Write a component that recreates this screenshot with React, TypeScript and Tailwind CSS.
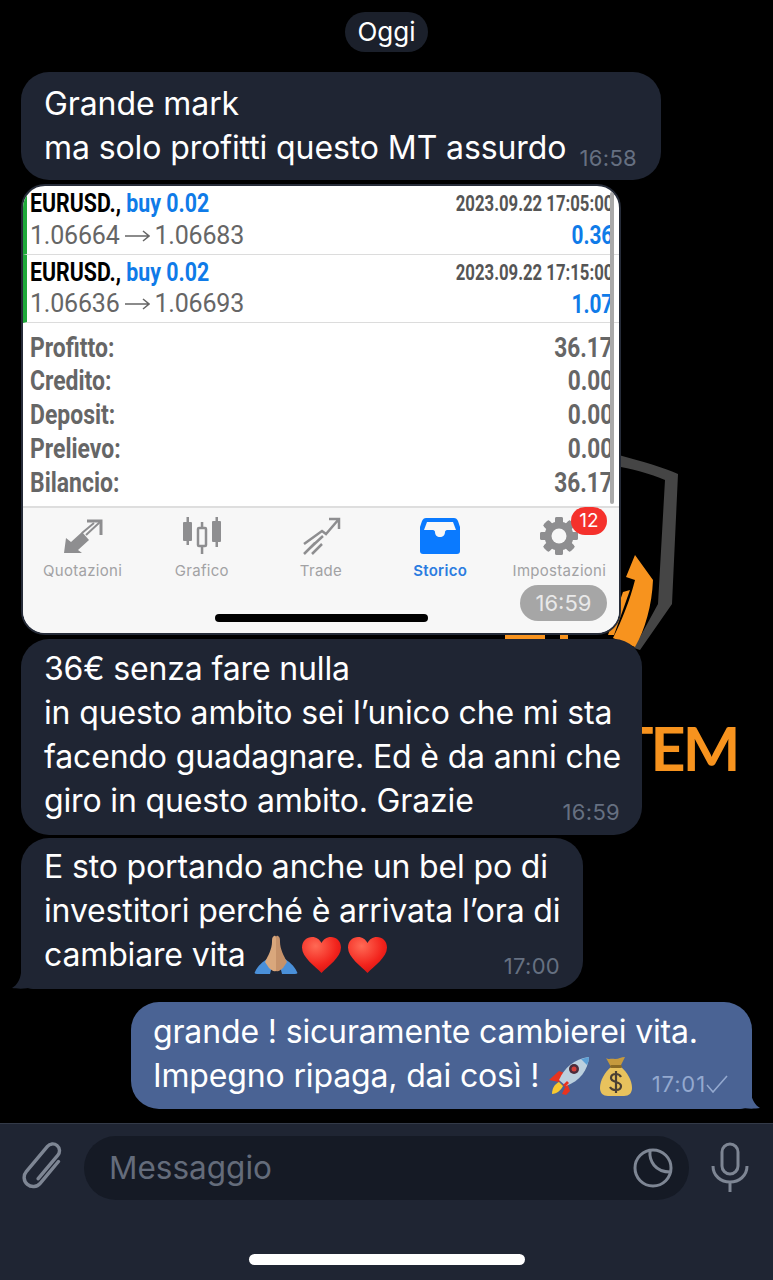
import { ReactNode } from 'react';

const trades = [
  { date: '2023.09.22 17:05:00', from: '1.06664', to: '1.06683', profit: '0.36' },
  { date: '2023.09.22 17:15:00', from: '1.06636', to: '1.06693', profit: '1.07' },
];

const summary = [
  { label: 'Profitto:', value: '36.17' },
  { label: 'Credito:', value: '0.00' },
  { label: 'Deposit:', value: '0.00' },
  { label: 'Prelievo:', value: '0.00' },
  { label: 'Bilancio:', value: '36.17' },
];

function Heart() {
  return (
    <svg width="41" height="38" viewBox="0 0 41 38">
      <defs>
        <radialGradient id="heartFill" cx="0.35" cy="0.25" r="0.9">
          <stop offset="0" stopColor="#ff6a55" />
          <stop offset="0.6" stopColor="#f2231c" />
          <stop offset="1" stopColor="#c90f12" />
        </radialGradient>
      </defs>
      <path d="M20.5 37C14 30 1 21.500 1 11.500 1 5 6 1 11 1c4.500 0 7.800 2.600 9.500 6C22.200 3.600 25.500 1 30 1c5 0 10 4 10 10.500C40 21.500 27 30 20.500 37z" fill="url(#heartFill)" />
    </svg>
  );
}

function PrayingHands() {
  return (
    <svg width="46" height="40" viewBox="0 0 46 40">
      <path d="M2 37c3-7 8-10 13-14l4 8-2 8H4c-2 0-3-1-2-2zM44 37c-3-7-8-10-13-14l-4 8 2 8h13c2 0 3-1 2-2z" fill="#4a90d9" />
      <path d="M21 1c2-1 2 1 2 2v33c-3 1-4-1-7-3l-4-6c3-6 7-13 7-20 0-3 0-5 2-6z" fill="#d9a77c" />
      <path d="M25 1c-2-1-2 1-2 2v33c3 1 4-1 7-3l4-6c-3-6-7-13-7-20 0-3 0-5-2-6z" fill="#c6926a" />
    </svg>
  );
}

function Rocket() {
  return (
    <svg width="42" height="40" viewBox="0 0 42 40">
      <path d="M1 24l10-9 8 3-8 8z" fill="#e8331f" />
      <path d="M14 38l5-11 3 8-4 4z" fill="#e8331f" />
      <path d="M4 38c0-6 3-10 7-12l4 4c-2 4-6 8-11 8z" fill="#f8c92f" />
      <path d="M11 24C16 12 26 3 41 1c-1 13-9 24-23 29z" fill="#bcd0de" />
      <path d="M33 3l8-2c0 3-1 6-2 8z" fill="#5b9fd6" />
      <path d="M15 29l4-4 2 2-4 4z" fill="#e8331f" />
      <circle cx="26" cy="13" r="5" fill="#4a2c3b" />
      <circle cx="26" cy="13" r="2.500" fill="#d43f38" />
    </svg>
  );
}

function MoneyBag() {
  return (
    <svg width="32" height="40" viewBox="0 0 32 40">
      <path d="M6 2c3 2 5 0 9 1 4 0 6-2 10-2l-5 10h-9z" fill="#c69a3d" />
      <path d="M11 11h10c6 5 11 13 11 21 0 5-3 8-8 8H8c-5 0-8-3-8-8 0-8 5-16 11-21z" fill="#e8c25d" />
      <rect x="10" y="9" width="12" height="3" rx="1.500" fill="#8a6a24" />
      <path d="M21 21c-1-2-3-3-5-3-3 0-5 1.500-5 4 0 5 10 3 10 8 0 2.500-2 4-5 4-2.500 0-5-1-6-3M16 15v22" fill="none" stroke="#4b4034" strokeWidth="2.200" />
    </svg>
  );
}

function Quotes() {
  return (
    <svg width="40" height="36" viewBox="0 0 40 36" fill="#8e8e90">
      <path d="M1 35l2-15 5 4 11-10 7 8-11 10 4 3z" />
      <path d="M24 3h14v14" fill="none" stroke="#8e8e90" strokeWidth="3" />
      <path d="M37 4L23 17M31 5L19 15" fill="none" stroke="#8e8e90" strokeWidth="2" />
    </svg>
  );
}

function Candles() {
  return (
    <svg width="40" height="38" viewBox="0 0 40 38" fill="#8e8e90">
      <rect x="1" y="5" width="9" height="19" rx="1" />
      <rect x="4.500" y="0" width="2.500" height="28" />
      <rect x="30" y="4" width="9" height="21" rx="1" />
      <rect x="33.500" y="0" width="2.500" height="30" />
      <rect x="16" y="11" width="8" height="18" rx="1" fill="none" stroke="#8e8e90" strokeWidth="2.500" />
      <rect x="18.800" y="5" width="2.500" height="6" />
      <rect x="18.800" y="29" width="2.500" height="8" />
    </svg>
  );
}

function TradeIcon() {
  return (
    <svg width="40" height="38" viewBox="0 0 40 38" fill="none" stroke="#8e8e90" strokeWidth="2.500">
      <path d="M28 2h10v10M37.500 2.500L25 17l-4-3L3 27" />
      <path d="M8 32l14-13M3 37l11-11M11 37l10-10" />
    </svg>
  );
}

function Inbox() {
  return (
    <svg width="40" height="36" viewBox="0 0 40 36">
      <path d="M6 0h28c2 0 3 1 4 3l2 6v24c0 2-1 3-3 3H3c-2 0-3-1-3-3V9l2-6c1-2 2-3 4-3z" fill="#0a7aff" />
      <path d="M7 4h26l3 8H27c-1 0-2 1-2 2 0 3-2 5-5 5s-5-2-5-5c0-1-1-2-2-2H4z" fill="#f7f7f7" />
    </svg>
  );
}

function Gear() {
  const teeth = [0, 45, 90, 135, 180, 225, 270, 315];
  return (
    <svg width="38" height="38" viewBox="0 0 38 38">
      {teeth.map((angle) => (
        <rect key={angle} x="15" y="0" width="8" height="38" rx="2" fill="#8e8e90" transform={`rotate(${angle} 19 19)`} />
      ))}
      <circle cx="19" cy="19" r="14.500" fill="#8e8e90" />
      <circle cx="19" cy="19" r="7.500" fill="#f7f7f7" />
    </svg>
  );
}

function Tab({ icon, label, active }: { icon: ReactNode; label: string; active?: boolean }) {
  return (
    <div className="flex flex-col items-center">
      <div className="h-[40px] flex items-center justify-center">{icon}</div>
      <span className={`mt-[6px] text-[15px] leading-[18px] tracking-[0.3px] font-['Inter',sans-serif] ${active ? 'text-[#2b7ce0] font-semibold' : 'text-[#a2a2a4]'}`}>
        {label}
      </span>
    </div>
  );
}

function Time({ children, className = 'text-[#667081]' }: { children: ReactNode; className?: string }) {
  return <span className={`text-[22px] leading-[24px] tracking-[0.3px] ${className}`}>{children}</span>;
}

function TradeCard() {
  return (
    <div className="w-[600px] h-[451px] mt-[4px] rounded-[24px] border-2 border-[#262c39] bg-white overflow-hidden relative font-['Roboto',sans-serif] whitespace-nowrap">
      {trades.map((t) => (
        <div key={t.date} className="h-[68.500px] border-b border-[#dcdcdc] border-l-4 border-l-[#1fa83a] pl-[3px] pr-[6px]">
          <div className="flex justify-between items-center h-[33px] pt-[2px]">
            <span className="inline-block scale-x-[0.82] origin-left text-[26px] font-bold text-black">
              EURUSD., <span className="text-[#0f7be8]">buy 0.02</span>
            </span>
            <span className="inline-block scale-x-[0.76] origin-right text-[22px] font-bold text-[#555]">{t.date}</span>
          </div>
          <div className="flex justify-between items-center h-[33px]">
            <span className="text-[25px] text-[#666] tracking-[-0.2px] flex items-center gap-[5px]">
              {t.from}
              <svg width="25" height="14" viewBox="0 0 25 14" fill="none" stroke="#666" strokeWidth="1.500">
                <path d="M0 7h24M18 2l6 5-6 5" />
              </svg>
              {t.to}
            </span>
            <span className="inline-block scale-x-[0.8] origin-right text-[26px] font-bold text-[#0f7be8]">{t.profit}</span>
          </div>
        </div>
      ))}
      <div className="h-[183px] pt-[8px] pl-[7px] pr-[6px]">
        {summary.map((s) => (
          <div key={s.label} className="flex justify-between items-center h-[33.800px] text-[27px] font-bold text-[#666]">
            <span className="inline-block scale-x-[0.85] origin-left">{s.label}</span>
            <span className="inline-block scale-x-[0.84] origin-right">{s.value}</span>
          </div>
        ))}
      </div>
      <div className="absolute right-[5px] top-[6px] h-[312px] w-[4px] rounded bg-[#a9a9a9]" />
      <div className="h-[127px] bg-[#f7f7f7] border-t-2 border-[#dedede] pt-[8px]">
        <div className="grid grid-cols-5">
          <Tab icon={<Quotes />} label="Quotazioni" />
          <Tab icon={<Candles />} label="Grafico" />
          <Tab icon={<TradeIcon />} label="Trade" />
          <Tab icon={<Inbox />} label="Storico" active />
          <Tab icon={<Gear />} label="Impostazioni" />
        </div>
        <div className="w-[213px] h-[8px] rounded-full bg-black ml-[192px] mt-[34px]" />
      </div>
      <span className="absolute right-[12px] top-[321px] w-[36px] h-[28px] rounded-full bg-[#f5312c] text-white text-[19px] leading-[28px] text-center font-['Inter',sans-serif]">12</span>
      <span className="absolute right-[12px] top-[399px] w-[87px] h-[36px] rounded-full bg-[#a6a6a6] text-[#e9e9e9] text-[22px] leading-[36px] text-center font-['Inter',sans-serif]">16:59</span>
    </div>
  );
}

function BackgroundLogo() {
  return (
    <div className="absolute left-0 top-0 w-full">
      <svg className="absolute left-[480px] top-[440px]" width="293" height="220" viewBox="0 0 293 220">
        <path d="M135 14c30 8 50 14 63 20l-6 130-32 46-6-2 24-44 7-124c-14-6-35-12-50-14z" fill="#454545" />
        <path d="M155 115l18 25c-1 25-8 50-18 67l-22-9c9-18 17-38 22-58l-9-3z" fill="#f7931e" />
        <path d="M143 152l7-2-16 45-6 0z" fill="#f7931e" />
        <path d="M25 190h40v12H25zM80 190h8v12h-8z" fill="#f7931e" />
      </svg>
      <span className="absolute left-[617px] top-[712px] text-[61px] leading-[72px] tracking-[-3px] font-bold text-[#f7931e] font-['Lato',sans-serif]">TEM</span>
    </div>
  );
}

export default function App() {
  return (
    <div className="relative w-[773px] h-[1280px] bg-black overflow-hidden flex flex-col font-['Inter',sans-serif] text-white">
      <BackgroundLogo />
      <div className="relative h-[1123px] pt-[12px] px-[21px]">
        <div className="flex justify-center">
          <span className="h-[40px] w-[83px] rounded-full bg-[#1b202b] text-[26px] leading-[40px] text-center text-white">Oggi</span>
        </div>

        <div className="mt-[20px] w-[640px] h-[108px] rounded-[28px] bg-[#1f2533] pl-[23px] pr-[24px] pt-[10px] text-[32px] leading-[44px] tracking-[-0.1px] whitespace-nowrap">
          <div>Grande mark</div>
          <div className="flex justify-between items-end">
            <span>ma solo profitti questo MT assurdo</span>
            <Time>16:58</Time>
          </div>
        </div>

        <TradeCard />

        <div className="mt-[4px] w-[621px] h-[196px] rounded-[28px] bg-[#1f2533] pl-[23px] pr-[22px] pt-[8px] text-[32px] leading-[44px] tracking-[-0.15px] whitespace-nowrap">
          <div>36€ senza fare nulla</div>
          <div>in questo ambito sei l’unico che mi sta</div>
          <div>facendo guadagnare. Ed è da anni che</div>
          <div className="flex justify-between items-end">
            <span>giro in questo ambito. Grazie</span>
            <span className="translate-y-[8px]"><Time>16:59</Time></span>
          </div>
        </div>

        <div className="relative mt-[3px] w-[562px] h-[151px] rounded-[28px] rounded-bl-[12px] bg-[#1f2533] pl-[23px] pr-[23px] pt-[7px] text-[32px] leading-[44px] tracking-[-0.15px] whitespace-nowrap">
          <div>E sto portando anche un bel po di</div>
          <div>investitori perché è arrivata l’ora di</div>
          <div className="flex justify-between items-center h-[44px]">
            <span className="flex items-center gap-[2px]">
              <span className="mr-[6px]">cambiare vita</span>
              <PrayingHands />
              <Heart />
              <span className="w-[1px]" />
              <Heart />
            </span>
            <span className="translate-y-[8px]"><Time>17:00</Time></span>
          </div>
          <svg className="absolute left-[-9px] bottom-0" width="22" height="16" viewBox="0 0 22 16">
            <path d="M20 0v14c-5 2-14 2-20 1 5-3 8-8 9-15z" fill="#1f2533" />
          </svg>
        </div>

        <div className="relative ml-[110px] mt-[13px] w-[621px] h-[107px] rounded-[28px] rounded-br-[12px] bg-[#4a6394] pl-[22px] pr-[24px] pt-[8px] text-[32px] leading-[44px] tracking-[-0.15px] whitespace-nowrap">
          <div>grande ! sicuramente cambierei vita.</div>
          <div className="flex items-center h-[44px]">
            <span className="mr-[9px]">Impegno ripaga, dai così !</span>
            <Rocket />
            <span className="w-[10px]" />
            <MoneyBag />
            <span className="ml-auto translate-y-[8px] flex items-center">
              <Time className="text-[#94a9cf] tracking-[0.9px]">17:01</Time>
              <svg width="22" height="18" viewBox="0 0 22 18" fill="none" stroke="#94a9cf" strokeWidth="1.600">
                <path d="M1 10l6 7L21 1" />
              </svg>
            </span>
          </div>
          <svg className="absolute right-[-8px] bottom-0" width="22" height="16" viewBox="0 0 22 16">
            <path d="M2 0v14c5 2 14 2 20 1-5-3-8-8-9-15z" fill="#4a6394" />
          </svg>
        </div>
      </div>

      <div className="relative h-[157px] bg-[#1f2533] border-t border-[#333a48] pt-[12px] pl-[20px] pr-[24px]">
        <div className="flex items-start">
          <svg className="mt-[6px]" width="44" height="50" viewBox="3 3 38 44" fill="none" stroke="#7e8694" strokeWidth="3" strokeLinecap="round">
            <path d="M30 12V37a8 8 0 0 1-16 0V8a6 6 0 0 1 12 0v27" transform="rotate(40 22 25)" />
          </svg>
          <div className="ml-[20px] flex-1 h-[64px] rounded-full bg-[#151a25] flex items-center justify-between pl-[25px] pr-[16px]">
            <span className="text-[31.500px] text-[#646c7b]">Messaggio</span>
            <svg width="40" height="40" viewBox="0 0 40 40" fill="none" stroke="#7e8694" strokeWidth="3">
              <circle cx="20" cy="20" r="18" />
              <path d="M17 2.500C16 13 22 24 37.500 24" />
            </svg>
          </div>
          <svg className="ml-[22px] mt-[6px]" width="38" height="50" viewBox="0 0 38 50" fill="none" stroke="#7e8694" strokeWidth="3">
            <rect x="11" y="2" width="16" height="30" rx="8" />
            <path d="M2 24c0 10 8 16 17 16s17-6 17-16M19 40v10" />
          </svg>
        </div>
        <div className="absolute left-[249px] top-[130px] w-[276px] h-[11px] rounded-full bg-white" />
      </div>
    </div>
  );
}
